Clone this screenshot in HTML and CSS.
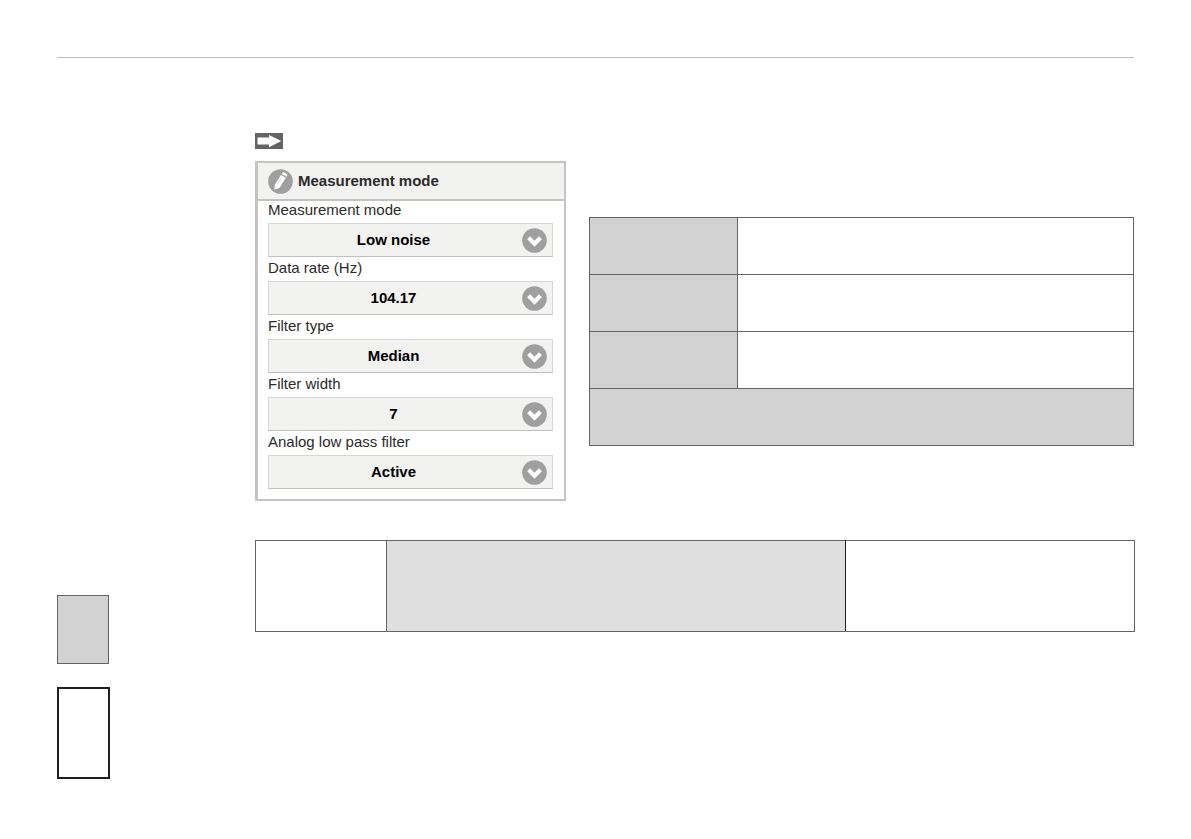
FILE: index.html
```html
<!DOCTYPE html>
<html lang="en">
<head>
<meta charset="utf-8">
<meta name="viewport" content="width=device-width, initial-scale=1">
<title>Measurement mode</title>
<link rel="stylesheet" href="styles.css">
</head>
<body>
<svg width="0" height="0" class="sprite" aria-hidden="true">
  <symbol id="chevron" viewBox="0 0 25 25">
    <circle cx="12.5" cy="12.5" r="12.3" fill="#9f9f9f"/>
    <path d="M6.6 9.7 12.5 15.7 18.4 9.7" fill="none" stroke="#fff" stroke-width="4.2"/>
  </symbol>
</svg>
<div class="page">
  <header class="rule"></header>
  <div class="columns">
    <aside class="sidebar">
      <div class="tab tab-grey"></div>
      <div class="tab tab-outline"></div>
    </aside>
    <main class="content">
      <svg class="arrow" viewBox="0 0 28 16" aria-hidden="true">
        <path d="M0 0H28V16H0Z" fill="#646464"/>
        <path d="M2.5 4.6H14V2L26.3 8.1 14 14.2V11.5H2.5Z" fill="#fff"/>
      </svg>
      <div class="split">
        <form class="panel">
          <h1 class="panel-title">
            <svg class="icon" viewBox="0 0 25 25" aria-hidden="true">
              <circle cx="12.5" cy="12.5" r="12.3" fill="#9f9f9f"/>
              <path d="M13 6 17.8 8.8 11.4 18.9 6.4 20.8 6.8 15.8Z" fill="#fff"/>
              <path d="M13.7 5 14.6 3.7Q15.2 2.9 16.1 3.4L18.9 5.1Q19.7 5.7 19.2 6.5L18.4 7.8Z" fill="#fff"/>
              <path d="M9.2 15.6 13.8 8.6" stroke="#c9c9c9" stroke-width="0.7"/>
            </svg>
            Measurement mode
          </h1>
          <div class="field">
            <label for="mode">Measurement mode</label>
            <div class="control"><select id="mode"><option>Low noise</option></select><svg class="icon chevron" aria-hidden="true"><use href="#chevron"/></svg></div>
          </div>
          <div class="field">
            <label for="rate">Data rate (Hz)</label>
            <div class="control"><select id="rate"><option>104.17</option></select><svg class="icon chevron" aria-hidden="true"><use href="#chevron"/></svg></div>
          </div>
          <div class="field">
            <label for="type">Filter type</label>
            <div class="control"><select id="type"><option>Median</option></select><svg class="icon chevron" aria-hidden="true"><use href="#chevron"/></svg></div>
          </div>
          <div class="field">
            <label for="width">Filter width</label>
            <div class="control"><select id="width"><option>7</option></select><svg class="icon chevron" aria-hidden="true"><use href="#chevron"/></svg></div>
          </div>
          <div class="field">
            <label for="lowpass">Analog low pass filter</label>
            <div class="control"><select id="lowpass"><option>Active</option></select><svg class="icon chevron" aria-hidden="true"><use href="#chevron"/></svg></div>
          </div>
        </form>
        <table class="grid modes">
          <colgroup><col class="col-key"><col></colgroup>
          <tbody>
            <tr><th></th><td></td></tr>
            <tr><th></th><td></td></tr>
            <tr><th></th><td></td></tr>
            <tr><th colspan="2"></th></tr>
          </tbody>
        </table>
      </div>
      <table class="grid summary">
        <colgroup><col class="col-name"><col class="col-values"><col></colgroup>
        <tbody>
          <tr><td></td><td class="shaded"></td><td></td></tr>
        </tbody>
      </table>
    </main>
  </div>
</div>
</body>
</html>
```
FILE: styles.css
```css
* {
  box-sizing: border-box;
}

body {
  margin: 0;
  background: #fff;
  color: #2b2b2b;
  font: 15px/18px "Liberation Sans", Arial, sans-serif;
}

.sprite {
  position: absolute;
}

.page {
  display: flex;
  flex-direction: column;
  min-height: 100vh;
  padding: 57px 56px 60px 57px;
}

.rule {
  margin-right: 1px;
  border-top: 1px solid #bdbdbd;
}

.columns {
  flex: 1;
  display: grid;
  grid-template-columns: 198px minmax(0, 1fr);
  padding-top: 75px;
}

.sidebar {
  display: flex;
  flex-direction: column;
  justify-content: flex-end;
  gap: 23px;
}

.tab-grey {
  width: 52px;
  height: 69px;
  background: #d2d2d2;
  border: 1px solid #646464;
}

.tab-outline {
  width: 53px;
  height: 92px;
  border: 2px solid #231f20;
}

.arrow {
  display: block;
  width: 28px;
  height: 16px;
  margin-bottom: 12px;
}

.split {
  display: grid;
  grid-template-columns: 311px minmax(0, 1fr);
  column-gap: 23px;
  align-items: start;
  padding-right: 1px;
}

.panel {
  padding-bottom: 8px;
  border: 2px solid #c4c4c4;
  border-left-width: 3px;
}

.panel-title {
  display: flex;
  align-items: center;
  gap: 5px;
  height: 38px;
  margin: 0;
  padding-left: 10px;
  background: #f2f2f1;
  border-bottom: 2px solid #c4c4c4;
  font-size: 15px;
}

.icon {
  width: 25px;
  height: 25px;
}

.field {
  display: grid;
  gap: 4px;
  padding: 0 11px 2px 10px;
}

.control {
  position: relative;
}

.control select {
  display: block;
  appearance: none;
  width: 100%;
  height: 34px;
  padding: 0 34px 0 0;
  background: #f2f2f1;
  border: 1px solid #d6d6d6;
  border-bottom-color: #c0c0c0;
  border-radius: 0;
  color: #000;
  font: bold 15px/18px "Liberation Sans", Arial, sans-serif;
  text-align: center;
  text-align-last: center;
}

.chevron {
  position: absolute;
  top: 5px;
  right: 6px;
  pointer-events: none;
}

.grid {
  width: 100%;
  border-collapse: collapse;
  table-layout: fixed;
}

.grid th,
.grid td {
  padding: 0;
  border: 1px solid #646464;
}

.grid th {
  background: #d2d2d2;
}

.modes {
  margin-top: 56px;
}

.modes tr {
  height: 57px;
}

.col-key {
  width: 148px;
}

.summary {
  margin-top: 39px;
}

.summary tr {
  height: 91px;
}

.col-name {
  width: 131px;
}

.col-values {
  width: 459px;
}

.grid .shaded {
  background: #dfdfdf;
  border-right-color: #231f20;
}
```
